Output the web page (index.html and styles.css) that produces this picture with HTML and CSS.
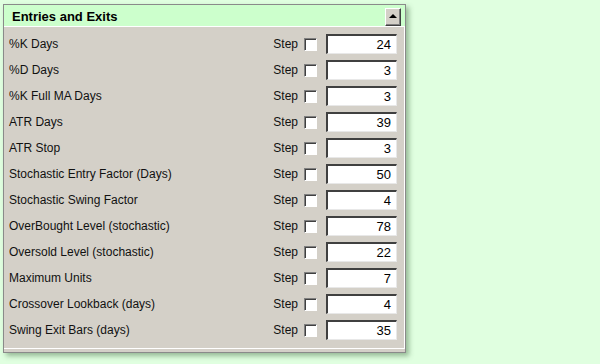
FILE: index.html
```html
<!DOCTYPE html>
<html>
<head>
<meta charset="utf-8">
<link rel="stylesheet" href="styles.css">
</head>
<body>
<div class="panel">
  <div class="header">
    <span class="title">Entries and Exits</span>
    <span class="collapse"><span class="tri"></span></span>
  </div>
  <div class="body">
    <div class="row"><span class="label">%K Days</span><span class="step">Step</span><span class="check"></span><span class="input">24</span></div>
    <div class="row"><span class="label">%D Days</span><span class="step">Step</span><span class="check"></span><span class="input">3</span></div>
    <div class="row"><span class="label">%K Full MA Days</span><span class="step">Step</span><span class="check"></span><span class="input">3</span></div>
    <div class="row"><span class="label">ATR Days</span><span class="step">Step</span><span class="check"></span><span class="input">39</span></div>
    <div class="row"><span class="label">ATR Stop</span><span class="step">Step</span><span class="check"></span><span class="input">3</span></div>
    <div class="row"><span class="label">Stochastic Entry Factor (Days)</span><span class="step">Step</span><span class="check"></span><span class="input">50</span></div>
    <div class="row"><span class="label">Stochastic Swing Factor</span><span class="step">Step</span><span class="check"></span><span class="input">4</span></div>
    <div class="row"><span class="label">OverBought Level (stochastic)</span><span class="step">Step</span><span class="check"></span><span class="input">78</span></div>
    <div class="row"><span class="label">Oversold Level (stochastic)</span><span class="step">Step</span><span class="check"></span><span class="input">22</span></div>
    <div class="row"><span class="label">Maximum Units</span><span class="step">Step</span><span class="check"></span><span class="input">7</span></div>
    <div class="row"><span class="label">Crossover Lookback (days)</span><span class="step">Step</span><span class="check"></span><span class="input">4</span></div>
    <div class="row"><span class="label">Swing Exit Bars (days)</span><span class="step">Step</span><span class="check"></span><span class="input">35</span></div>
  </div>
</div>
</body>
</html>
```
FILE: styles.css
```css
html, body {
  margin: 0;
  padding: 0;
}
body {
  background: #e0ffe0;
  width: 600px;
  height: 364px;
  overflow: hidden;
  font-family: "Liberation Sans", Arial, sans-serif;
  font-size: 12px;
  color: #000;
}
.panel {
  margin: 4px 0 0 3px;
  width: 401px;
  border: 1px solid #8a8a8a;
  background: #d4d0c8;
  box-shadow: 3px 3px 5px rgba(60, 100, 60, 0.45);
  padding-bottom: 3px;
}
.header {
  height: 21px;
  background: #ccffcc;
  border-bottom: 1px solid #ffffff;
  display: flex;
  align-items: center;
  padding-left: 8px;
  padding-right: 4px;
}
.title {
  flex: 1;
  font-weight: bold;
  font-size: 13px;
  padding-top: 1px;
}
.collapse {
  width: 14px;
  height: 16px;
  background: #d4d0c8;
  border-top: 1px solid #ffffff;
  border-left: 1px solid #ffffff;
  border-right: 1px solid #404040;
  border-bottom: 1px solid #404040;
  box-shadow: inset -1px -1px 0 #808080;
  display: flex;
  align-items: center;
  justify-content: center;
  margin-top: 2px;
}
.tri {
  width: 0;
  height: 0;
  border-left: 4px solid transparent;
  border-right: 4px solid transparent;
  border-bottom: 4px solid #000;
  margin-top: -2px;
  margin-left: -1px;
}
.body {
  padding: 4px 7px 5px 5px;
  border-bottom: 1px solid #ffffff;
  border-right: 1px solid #ffffff;
}
.row {
  height: 26px;
  display: flex;
  align-items: center;
}
.label {
  flex: 1;
  color: #111;
}
.step {
  color: #111;
}
.check {
  width: 11px;
  height: 11px;
  margin-left: 6px;
  background: #fff;
  border-top: 1px solid #808080;
  border-left: 1px solid #808080;
  border-right: 1px solid #ffffff;
  border-bottom: 1px solid #ffffff;
  box-shadow: inset 1px 1px 0 #404040;
}
.input {
  width: 63px;
  height: 17px;
  margin-left: 9px;
  background: #fff;
  border-top: 2px solid #404040;
  border-left: 2px solid #404040;
  border-right: 1px solid #e8e8e8;
  border-bottom: 1px solid #e8e8e8;
  text-align: right;
  padding-right: 5px;
  line-height: 18px;
  font-size: 13px;
}
```
